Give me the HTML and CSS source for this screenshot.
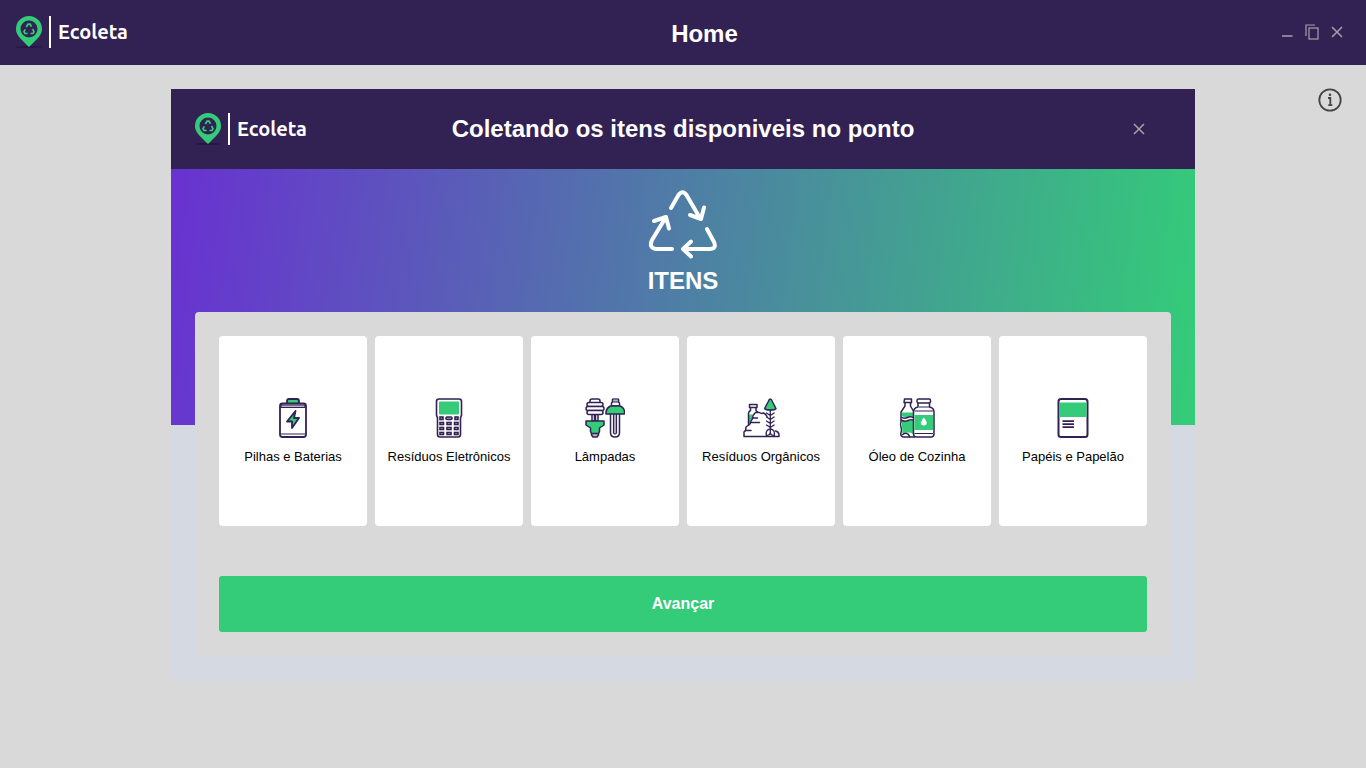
FILE: index.html
```html
<!DOCTYPE html>
<html lang="pt-BR">
<head>
<meta charset="utf-8">
<meta name="viewport" content="width=device-width, initial-scale=1">
<title>Ecoleta</title>
<link rel="stylesheet" href="styles.css">
</head>
<body>
<svg class="sprites" aria-hidden="true">
  <symbol id="pin" viewBox="0 0 26 32">
    <ellipse cx="13" cy="31" rx="13" ry="1" fill="#231942"/>
    <path fill="#34cb79" fill-rule="evenodd" d="M13 0a13 13 0 0 1 13 13c0 6-4 9-13 18C4 22 0 19 0 13A13 13 0 0 1 13 0zm0 4.500a8.500 8.500 0 1 0 0 17 8.500 8.500 0 0 0 0-17z"/>
    <g fill="none" stroke="#34cb79" stroke-width="1.700"><path d="M10.300 11l1.700-2.800h2l1.500 2.500M16.500 13l1.500 2.700-1 1.800h-2.500M11.700 17.500H9l-1-1.800 1.300-2.300"/></g>
  </symbol>
  <symbol id="cross" viewBox="0 0 12 12"><path d="M1 1l10 10M11 1L1 11" fill="none" stroke="#a5a2a8" stroke-width="1.500"/></symbol>
</svg>

<header class="topbar">
  <div class="brand"><svg class="pin" aria-hidden="true"><use href="#pin"/></svg><span class="brand-name">Ecoleta</span></div>
  <h1 class="title">Home</h1>
  <div class="window-controls">
    <button class="icon-button" type="button" aria-label="Minimizar"><svg width="12" height="16" viewBox="0 0 12 16"><path d="M1 12h10.500" stroke="#a5a2a8" stroke-width="1.500"/></svg></button>
    <button class="icon-button" type="button" aria-label="Restaurar"><svg width="14" height="16" viewBox="0 0 14 16" fill="none" stroke="#a5a2a8" stroke-width="1.200"><path d="M1 12V1h9"/><rect x="4" y="4" width="9" height="11"/></svg></button>
    <button class="icon-button" type="button" aria-label="Fechar"><svg width="12" height="12"><use href="#cross"/></svg></button>
  </div>
</header>

<button class="icon-button info" type="button" aria-label="Informações"><svg width="24" height="24" viewBox="0 0 24 24" fill="none" stroke="#444"><circle cx="12" cy="12" r="10.700" stroke-width="1.800"/><path d="M10 10h2.300v7M10.300 17.200h4" stroke-width="1.800"/><circle cx="12" cy="6.800" r="1.300" fill="#444" stroke="none"/></svg></button>

<main class="dialog" role="dialog" aria-labelledby="dialog-title">
  <header class="dialog-header">
    <div class="brand"><svg class="pin" aria-hidden="true"><use href="#pin"/></svg><span class="brand-name">Ecoleta</span></div>
    <h2 class="title" id="dialog-title">Coletando os itens disponiveis no ponto</h2>
    <button class="icon-button dialog-close" type="button" aria-label="Fechar"><svg width="12" height="12"><use href="#cross"/></svg></button>
  </header>
  <div class="dialog-body">
    <div class="hero">
      <svg width="70" height="70" viewBox="0 0 70 70" fill="none" stroke="#fff" stroke-width="4" stroke-linecap="round" stroke-linejoin="round" aria-hidden="true">
        <path d="M23 18l7.500-13q4-5.500 8 0l14 24M42 25l11 4 3-11.500"/>
        <path d="M24 59H8q-7.500-1-4-9l14-23M6 31l12-4 3 11.500"/>
        <path d="M59 39l7 13q3 7-4.500 7H35M43 51.500l-8 7.500 8 7.500"/>
      </svg>
      <h3 class="title">ITENS</h3>
    </div>
    <form class="panel">
      <div class="items">
        <button type="button" class="item">
          <svg class="item-icon" viewBox="0 0 40 40" fill="#fff" stroke="#322153" stroke-width="1.800" stroke-linejoin="round"><path fill="#34cb79" d="M14 5V3q0-2 2-2h8q2 0 2 2v2"/><rect x="7" y="5.500" width="26" height="33.500" rx="2.500"/><path fill="#b9b4c6" stroke-width="1.200" d="M8 7h24v2.500H8zM8 36h24"/><path fill="#34cb79" d="M22.500 13L14 23.500h5V30l7-10h-5z"/></svg>
          <span>Pilhas e Baterias</span>
        </button>
        <button type="button" class="item">
          <svg class="item-icon" viewBox="0 0 40 40" fill="#fff" stroke="#322153" stroke-width="1.600"><path d="M10 1h20q2.500 0 2.500 2.500V17l-1 3v16.500q0 2.500-2.500 2.500H11q-2.500 0-2.500-2.500V20l-1-3V3.500Q7.500 1 10 1z"/><rect x="10" y="3.500" width="20" height="13" rx="1" fill="#34cb79" stroke="none"/><g fill="#a6a0b8"><rect x="11" y="19" width="3" height="2.500"/><rect x="17" y="19" width="6" height="2.500" rx="1"/><rect x="26" y="19" width="3" height="2.500"/></g><g><rect x="11" y="24.500" width="3.500" height="2"/><rect x="18" y="24.500" width="4" height="2"/><rect x="25.500" y="24.500" width="3.500" height="2"/><rect x="11" y="29.500" width="3.500" height="2"/><rect x="18" y="29.500" width="4" height="2"/><rect x="25.500" y="29.500" width="3.500" height="2"/><rect x="11" y="34.500" width="3.500" height="2"/><rect x="18" y="34.500" width="4" height="2"/><rect x="25.500" y="34.500" width="3.500" height="2"/></g></svg>
          <span>Resíduos Eletrônicos</span>
        </button>
        <button type="button" class="item">
          <svg class="item-icon" viewBox="0 0 40 40" fill="#fff" stroke="#322153" stroke-width="1.500" stroke-linejoin="round"><path d="M7 15h2.500v8H7zM10.500 15H13v8h-2.500z"/><path d="M5 5V3q0-2 2-2h6q2 0 2 2v2z"/><rect x="2" y="4.500" width="16" height="4" rx="2"/><rect x="1" y="8.500" width="18" height="4" rx="2"/><rect x="2" y="12.500" width="16" height="4" rx="2"/><path fill="#b9b4c6" d="M6.500 34h7v3l-1.500 2H8l-1.500-2z"/><path fill="#34cb79" d="M1 23h18v4l-4.500 3v3.500l-1 2h-7l-1-2V30L1 27z"/><path d="M26.500 8V5l1-1V1.500h6V4l1 1v3z"/><path fill="#b9b4c6" stroke-width="1.200" d="M27.500 1h6v3h-6z"/><path d="M25.500 16v18.500q0 4.500 4.500 4.500t4.500-4.500V16"/><path fill="#b9b4c6" stroke-width="1.200" d="M28.500 16v19q1.500 2 3 0V16"/><path fill="#34cb79" d="M21 16v-2.500q1-4 4.500-5.500h9.500q4 1.500 4.500 5.500V16z"/></svg>
          <span>Lâmpadas</span>
        </button>
        <button type="button" class="item">
          <svg class="item-icon" viewBox="0 0 40 40" fill="none" stroke="#322153" stroke-width="1.500" stroke-linecap="round" stroke-linejoin="round"><path fill="#34cb79" stroke="none" d="M8 16.500h4L11 22l-3 4z"/><path d="M7.500 27V15.500q0-2 2-3V9.500h5.500v3l1.500 1.500M8.500 6.500H16v3H8.500z"/><path d="M29 38.500H3V34q2-1 2-5l4-3q1-4 2.500-5 0-4 3-6.500h4q2 1.500 4 .5 2.500 1 3.500 3.500M29 38.500h9v-2q-.500-3-3.500-3.500"/><path d="M11.500 20h5M9.500 24.500h9M4.500 32.500H10"/><path fill="#34cb79" d="M29.300 1q1.200 0 2 2.500l3.700 7q-1 1.500-5.700 1.500T23.600 10.500l3.700-7q.8-2.500 2-2.500z"/><path stroke-width="1.300" d="M29.300 12v24M25.500 15l3.800 2.500 3.800-2.500M25.500 19l3.800 2.500 3.800-2.500M25.500 23l3.800 2.500 3.800-2.500M25.500 27l3.800 2.500 3.800-2.500M29.300 31q-5 .500-4 6.500 3.500 0 4-3 .5 3 4 3 1-6-4-6.500"/></svg>
          <span>Resíduos Orgânicos</span>
        </button>
        <button type="button" class="item">
          <svg class="item-icon" viewBox="0 0 40 40" fill="#fff" stroke="#322153" stroke-width="1.500" stroke-linejoin="round"><path d="M7.500 1h7v3.500l-1 .5v3l4 7v24H6q-3-1-2-4.500 1-3 0-5.500-1-3 0-5V14l4-6V5l-1-.5z"/><path fill="#34cb79" stroke="none" d="M5 14.500h12v4q-3-1-6 .5-3 1-6-1zM5 23q3 1 6 0 3-1 6 0v13h-1q-2-2-5-1.500L5 35q1-3 0-6z"/><path fill="none" d="M4 19q3 2 6.500.5Q14 18 17 20M4 22q4 2 7 .500 3-1.500 6 0M5 37q3-3 6-1l2 3M7.500 4.500h7"/><path d="M21 5v4q-4.500 1-4.500 5v22q0 3 3 3H34q3 0 3-3V14q0-4-4.500-5V5"/><rect x="20" y="1" width="13.500" height="4" rx="1.500"/><path fill="#34cb79" stroke="none" d="M17.500 17H36v15H17.500z"/><path fill="none" stroke-width="1.200" d="M22 9h10M17.500 13H36M17.500 35.500H36"/><path stroke="none" d="M26.800 19.500q3 4 3 5.500-.3 2.500-3 2.500t-3-2.500q0-1.500 3-5.500z"/></svg>
          <span>Óleo de Cozinha</span>
        </button>
        <button type="button" class="item">
          <svg class="item-icon" viewBox="0 0 40 40" fill="#fff" stroke="#322153" stroke-width="2"><rect x="5.500" y="1" width="29" height="38" rx="2.500"/><path fill="#34cb79" stroke="none" d="M6.500 4.500h27V19h-27z"/><path d="M9.500 23.200H21M9.500 26.200H21M9.500 29.200H21" stroke-width="1.800"/></svg>
          <span>Papéis e Papelão</span>
        </button>
      </div>
      <button class="submit" type="button">Avançar</button>
    </form>
  </div>
</main>
</body>
</html>
```
FILE: styles.css
```css
* { box-sizing: border-box; }

body {
  margin: 0;
  min-height: 100vh;
  background: #d9d9d9;
  font-family: "Liberation Sans", Arial, sans-serif;
  position: relative;
}

button { font-family: inherit; border: 0; cursor: pointer; }

.sprites { position: absolute; width: 0; height: 0; }

.topbar,
.dialog-header {
  align-items: center;
  background: #322153;
}

.topbar {
  display: flex;
  justify-content: space-between;
  height: 65px;
  padding: 0 23px 2px 16px;
}

.topbar .title { padding-top: 4px; }

.title {
  margin: 0;
  color: #fff;
  font-size: 24px;
  line-height: 28px;
  font-weight: 700;
}

.brand { display: flex; align-items: center; }

.pin { width: 26px; height: 32px; margin-right: 7px; }

.brand-name {
  border-left: 2px solid #fff;
  padding-left: 7px;
  color: #fff;
  font: 700 20px/32px Ubuntu, "Noto Sans", sans-serif;
}

.window-controls {
  display: flex;
  align-items: center;
  gap: 12px;
}

.icon-button { display: flex; padding: 0; background: none; }

.info { position: absolute; top: 88px; right: 24px; }

.dialog {
  width: 75%;
  max-width: 1024px;
  margin: 24px auto;
  background: #d5d9e2;
}

.dialog-header {
  display: grid;
  grid-template-columns: 1fr auto 1fr;
  min-height: 80px;
  padding: 0 50px 0 24px;
}

.dialog-header .title { margin-left: 26px; }

.dialog-close { justify-self: end; }

.dialog-body {
  padding: 21px 24px 24px;
  background: linear-gradient(97deg, #6833d0 1%, #34cb79 99%) top / 100% 256px no-repeat;
}

.hero {
  display: flex;
  flex-direction: column;
  align-items: center;
  gap: 7px;
}

.panel {
  margin-top: 17px;
  padding: 24px;
  border-radius: 4px;
  background: #d9d9d9;
}

.items {
  display: grid;
  grid-template-columns: repeat(6, 1fr);
  gap: 8px;
  margin-bottom: 50px;
}

.item {
  display: flex;
  flex-direction: column;
  align-items: center;
  justify-content: center;
  gap: 11px;
  min-height: 190px;
  padding: 9px 8px 8px;
  border-radius: 4px;
  background: #fff;
  color: #000;
  font-size: 13px;
  line-height: 16px;
}

.item-icon { width: 40px; height: 40px; }

.submit {
  width: 100%;
  height: 56px;
  border-radius: 3px;
  background: #34cb79;
  color: #fff;
  font-size: 16px;
  font-weight: 700;
}
```
